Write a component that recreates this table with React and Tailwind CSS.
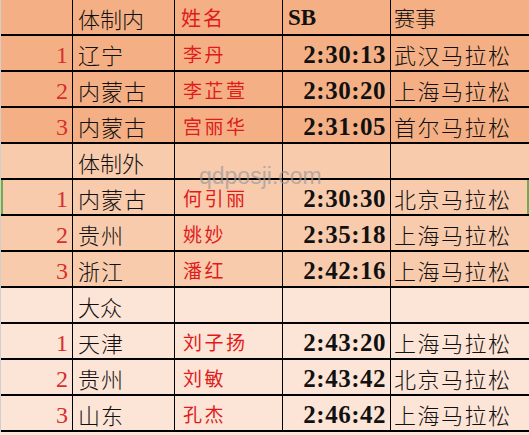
import React from "react";

const sections = [
  {
    bg: "bg-[#f4b084]",
    head: { label: "体制内", name: "姓名", sb: "SB", race: "赛事", isHeader: true },
    rows: [
      ["1", "辽宁", "李丹", "2:30:13", "武汉马拉松"],
      ["2", "内蒙古", "李芷萱", "2:30:20", "上海马拉松"],
      ["3", "内蒙古", "宫丽华", "2:31:05", "首尔马拉松"],
    ],
  },
  {
    bg: "bg-[#f8cbad]",
    head: { label: "体制外" },
    rows: [
      ["1", "内蒙古", "何引丽", "2:30:30", "北京马拉松", true],
      ["2", "贵州", "姚妙", "2:35:18", "上海马拉松"],
      ["3", "浙江", "潘红", "2:42:16", "上海马拉松"],
    ],
  },
  {
    bg: "bg-[#fce4d6]",
    head: { label: "大众" },
    rows: [
      ["1", "天津", "刘子扬", "2:43:20", "上海马拉松"],
      ["2", "贵州", "刘敏", "2:43:42", "北京马拉松"],
      ["3", "山东", "孔杰", "2:46:42", "上海马拉松"],
    ],
  },
];

const cjk = "font-['Noto_Sans_CJK_SC',sans-serif]";
const serif = "font-['Liberation_Serif','Noto_Sans_CJK_SC',serif]";

export default function App() {
  return (
    <div className="relative w-[529px] h-[435px] overflow-hidden bg-[#fce4d6]">
      <div className="pl-px bg-[#cfcfcf]">
        <div className="grid grid-cols-[71px_101px_107px_107px_1fr] gap-x-px gap-y-[2px] bg-black pb-[2px]">
          {sections.map((s, si) => (
            <React.Fragment key={si}>
              <div className={`${s.bg} h-[34px]`} />
              <div className={`${s.bg} h-[34px] flex items-center pl-[5px] pt-[2px] text-[22px] font-light text-[#111] ${cjk}`}>
                {s.head.label}
              </div>
              <div className={`${s.bg} h-[34px] flex items-center pl-[6px] pt-[2px] text-[20px] tracking-[2px] text-[#e01b1b] ${cjk}`}>
                {s.head.name || ""}
              </div>
              <div className={`${s.bg} h-[34px] flex items-center pl-[5px] pt-[2px] text-[23px] font-bold text-[#111] ${serif}`}>
                {s.head.sb || ""}
              </div>
              <div className={`${s.bg} h-[34px] flex items-center pl-[3px] pt-[2px] text-[21px] font-light text-[#111] ${cjk}`}>
                {s.head.race || ""}
              </div>
              {s.rows.map((r, ri) => (
                <React.Fragment key={ri}>
                  <div
                    className={`${s.bg} h-[34px] flex items-center justify-end pr-[4px] pt-[3px] text-[24px] text-[#d6302c] ${serif} ${
                      r[5] ? "border-l-[2px] border-l-[#70ad47]" : ""
                    }`}
                  >
                    {r[0]}
                  </div>
                  <div className={`${s.bg} h-[34px] flex items-center pl-[5px] pt-[3px] text-[22px] font-light tracking-[1px] text-[#111] ${cjk}`}>
                    {r[1]}
                  </div>
                  <div className={`${s.bg} h-[34px] flex items-center pl-[8px] pt-[3px] text-[19px] tracking-[2.5px] text-[#e01b1b] ${cjk}`}>
                    {r[2]}
                  </div>
                  <div className={`${s.bg} h-[34px] flex items-center justify-end pr-[4px] pt-[3px] text-[25px] font-bold tracking-[0.5px] text-[#111] ${serif}`}>
                    {r[3]}
                  </div>
                  <div
                    className={`${s.bg} h-[34px] flex items-center pl-[3px] pt-[3px] text-[22px] font-light tracking-[1.5px] text-[#111] ${cjk} ${
                      r[5] ? "border-r-[2px] border-r-[#70ad47]" : ""
                    }`}
                  >
                    {r[4]}
                  </div>
                </React.Fragment>
              ))}
            </React.Fragment>
          ))}
        </div>
      </div>
      <div className="absolute left-[199px] top-[165px] text-[23px] leading-none text-[#9a9a9a]/70 font-['Liberation_Sans',sans-serif] pointer-events-none">
        qdposji.com
      </div>
    </div>
  );
}
